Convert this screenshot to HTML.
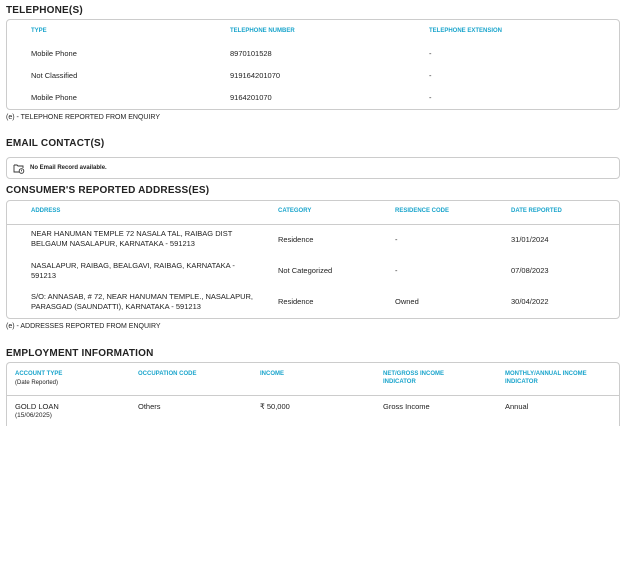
<!DOCTYPE html>
<html><head><style>
*{margin:0;padding:0;box-sizing:border-box}
body{width:632px;height:582px;background:#fff;font-family:"Liberation Sans",sans-serif;color:#222;position:relative;overflow:hidden}
.a{position:absolute;white-space:nowrap}
.t{font-size:10px;font-weight:bold;color:#222;letter-spacing:0.2px}
.h{font-size:6px;font-weight:bold;color:#1ba5cc;line-height:7.5px}
.d{font-size:7.5px;line-height:10px;color:#222}
.box{position:absolute;border:1px solid #ccc;border-radius:4px}
</style></head><body>
<div class="a t" style="left:6px;top:5px">TELEPHONE(S)</div>
<div class="box" style="left:6px;top:19px;width:614px;height:91px"></div>
<div class="a h" style="left:31px;top:28px">TYPE</div>
<div class="a h" style="left:230px;top:28px">TELEPHONE NUMBER</div>
<div class="a h" style="left:429px;top:28px">TELEPHONE EXTENSION</div>
<div class="a d" style="left:31px;top:49px">Mobile Phone</div>
<div class="a d" style="left:230px;top:49px">8970101528</div>
<div class="a d" style="left:429px;top:49px">-</div>
<div class="a d" style="left:31px;top:71px">Not Classified</div>
<div class="a d" style="left:230px;top:71px">919164201070</div>
<div class="a d" style="left:429px;top:71px">-</div>
<div class="a d" style="left:31px;top:93px">Mobile Phone</div>
<div class="a d" style="left:230px;top:93px">9164201070</div>
<div class="a d" style="left:429px;top:93px">-</div>
<div class="a d" style="left:6px;top:113px;font-size:7px">(e) - TELEPHONE REPORTED FROM ENQUIRY</div>

<div class="a t" style="left:6px;top:138px">EMAIL CONTACT(S)</div>
<div class="box" style="left:6px;top:157px;width:614px;height:22px"></div>
<svg class="a" style="left:13px;top:163px" width="12" height="11" viewBox="0 0 12 11"><path d="M1 2h3l1 1h5v2M1 2v7h5" fill="none" stroke="#333" stroke-width="0.9"/><circle cx="8.5" cy="8" r="2.3" fill="#fff" stroke="#333" stroke-width="0.9"/><path d="M8.5 6.8v1.6" stroke="#333" stroke-width="0.8"/></svg>
<div class="a d" style="left:30px;top:163px;font-size:6px;font-weight:bold">No Email Record available.</div>

<div class="a t" style="left:6px;top:185px">CONSUMER'S REPORTED ADDRESS(ES)</div>
<div class="box" style="left:6px;top:200px;width:614px;height:119px"></div>
<div class="a" style="left:7px;top:224px;width:612px;height:1px;background:#ccc"></div>
<div class="a h" style="left:31px;top:208px">ADDRESS</div>
<div class="a h" style="left:278px;top:208px">CATEGORY</div>
<div class="a h" style="left:395px;top:208px">RESIDENCE CODE</div>
<div class="a h" style="left:511px;top:208px">DATE REPORTED</div>
<div class="a d" style="left:31px;top:229px">NEAR HANUMAN TEMPLE 72 NASALA TAL, RAIBAG DIST<br>BELGAUM NASALAPUR, KARNATAKA - 591213</div>
<div class="a d" style="left:278px;top:235px">Residence</div>
<div class="a d" style="left:395px;top:235px">-</div>
<div class="a d" style="left:511px;top:235px">31/01/2024</div>
<div class="a d" style="left:31px;top:261px">NASALAPUR, RAIBAG, BEALGAVI, RAIBAG, KARNATAKA -<br>591213</div>
<div class="a d" style="left:278px;top:266px">Not Categorized</div>
<div class="a d" style="left:395px;top:266px">-</div>
<div class="a d" style="left:511px;top:266px">07/08/2023</div>
<div class="a d" style="left:31px;top:292px">S/O: ANNASAB, # 72, NEAR HANUMAN TEMPLE., NASALAPUR,<br>PARASGAD (SAUNDATTI), KARNATAKA - 591213</div>
<div class="a d" style="left:278px;top:297px">Residence</div>
<div class="a d" style="left:395px;top:297px">Owned</div>
<div class="a d" style="left:511px;top:297px">30/04/2022</div>
<div class="a d" style="left:6px;top:322px;font-size:7px">(e) - ADDRESSES REPORTED FROM ENQUIRY</div>

<div class="a t" style="left:6px;top:348px">EMPLOYMENT INFORMATION</div>
<div class="a" style="left:6px;top:362px;width:614px;height:70px;border:1px solid #ccc;border-bottom:none;border-radius:4px 4px 0 0"></div>
<div class="a" style="left:7px;top:395px;width:612px;height:1px;background:#ccc"></div>
<div class="a" style="left:0;top:426px;width:632px;height:20px;background:#fff"></div>
<div class="a h" style="left:15px;top:371px">ACCOUNT TYPE</div>
<div class="a d" style="left:15px;top:378px;font-size:6px">(Date Reported)</div>
<div class="a h" style="left:138px;top:371px">OCCUPATION CODE</div>
<div class="a h" style="left:260px;top:371px">INCOME</div>
<div class="a h" style="left:383px;top:371px">NET/GROSS INCOME<br>INDICATOR</div>
<div class="a h" style="left:505px;top:371px">MONTHLY/ANNUAL INCOME<br>INDICATOR</div>
<div class="a d" style="left:15px;top:402px">GOLD LOAN</div>
<div class="a d" style="left:15px;top:411px;font-size:6.5px">(15/06/2025)</div>
<div class="a d" style="left:138px;top:402px">Others</div>
<div class="a d" style="left:260px;top:402px">₹ 50,000</div>
<div class="a d" style="left:383px;top:402px">Gross Income</div>
<div class="a d" style="left:505px;top:402px">Annual</div>
</body></html>
